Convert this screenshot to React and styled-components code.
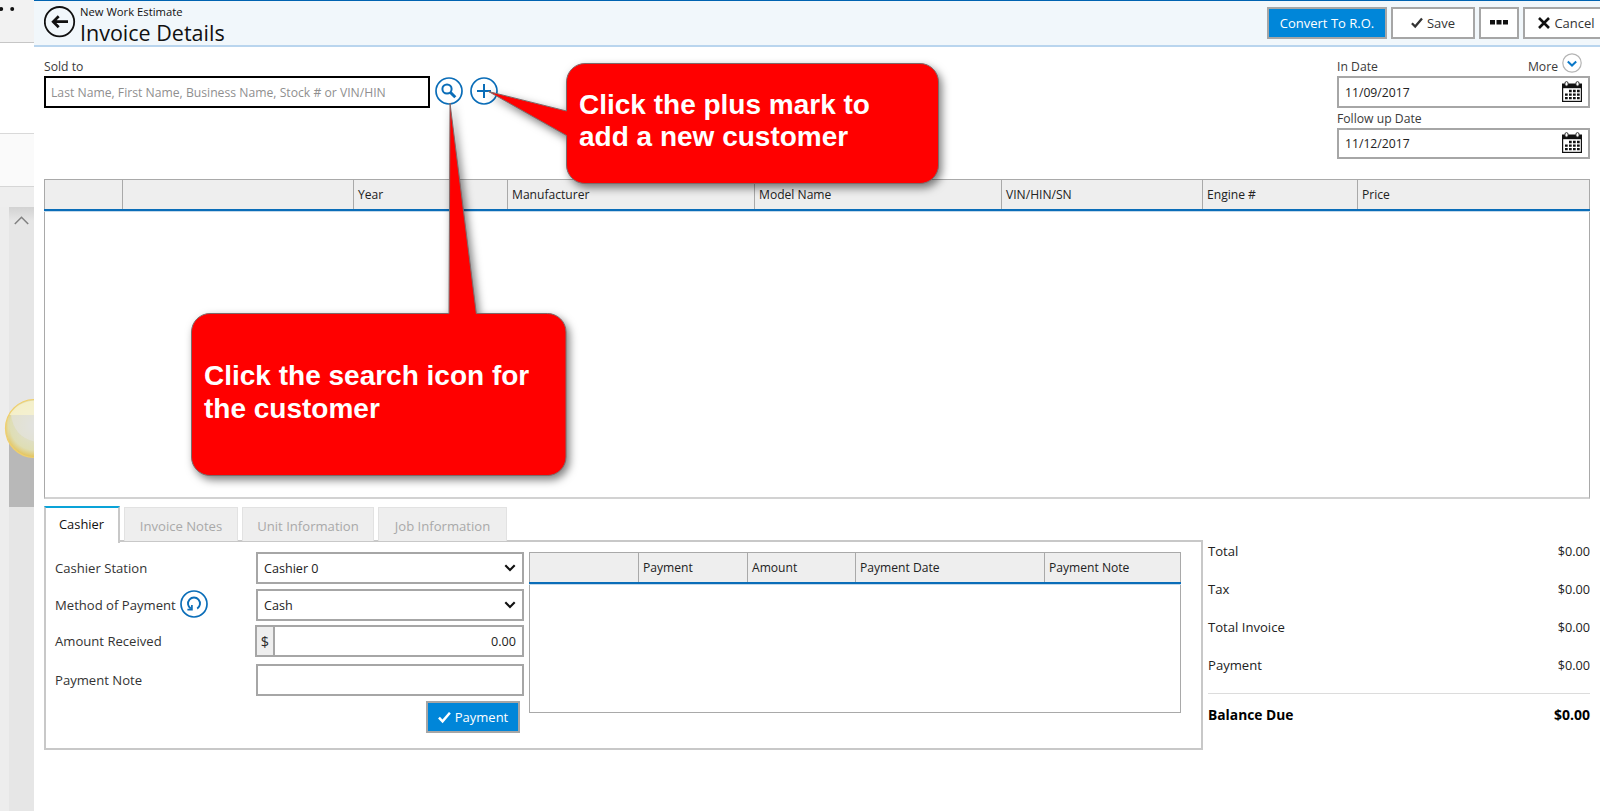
import React from 'react';
import styled, { createGlobalStyle, css } from 'styled-components';

const Global = createGlobalStyle`
  *, *::before, *::after { box-sizing: border-box; }
  body { margin: 0; background: #fff; overflow: hidden; }
  svg { display: block; flex: none; }
  button, input { font: inherit; }
`;

const Page = styled.div`
  position: relative;
  display: flex;
  width: 1600px;
  height: 811px;
  overflow: hidden;
  font-family: 'Open Sans', 'Noto Sans', sans-serif;
  font-size: 12.2px;
  color: #2b2b2b;
  white-space: nowrap;
`;

/* ---------- strip of the window behind ---------- */
const Backdrop = styled.aside`
  width: 34px;
  flex: none;
  display: flex;
  flex-direction: column;
  overflow: hidden;
  position: relative;
`;
const Band = styled.div`
  height: ${(p) => p.$h}px;
  background: ${(p) => p.$bg};
  border-bottom: ${(p) => (p.$line ? `1px solid ${p.$line}` : '0')};
  flex: none;
`;
const ScrollArea = styled.div`
  flex: 1;
  display: flex;
  background: #ededed;
  padding-left: 9px;
`;
const Track = styled.div`
  flex: 1;
  display: flex;
  flex-direction: column;
  align-items: center;
  background: linear-gradient(#d2d2d2, #e6e6e6 14px);
  padding-top: 9px;
`;
const ScrollArrow = styled.svg`
  margin-left: -1px;
`;
const Thumb = styled.div`
  width: 100%;
  height: 92px;
  margin-top: 190px;
  background: #b8b8b8;
`;
const Bubble = styled.svg`
  position: absolute;
  left: 4px;
  top: 398px;
`;
const Dots = styled.svg`
  position: absolute;
  left: 0;
  top: 5px;
`;

/* ---------- main window ---------- */
const Main = styled.main`
  flex: 1;
  display: flex;
  flex-direction: column;
  min-width: 0;
`;
const Header = styled.header`
  height: 47px;
  flex: none;
  display: flex;
  align-items: flex-start;
  padding-left: 10px;
  background: #f1f7fb;
  border-top: 1px solid #0063b1;
  border-bottom: 2px solid #b9d5ee;
  overflow: hidden;
`;
const BackIcon = styled.svg`
  margin-top: 5px;
`;
const Titles = styled.div`
  margin-left: 4px;
  flex: 1;
  color: #111;
`;
const Subtitle = styled.div`
  font-size: 11.25px;
  line-height: 14px;
  margin-top: 4px;
`;
const Title = styled.h1`
  margin: 0;
  font-weight: 400;
  font-size: 21.5px;
  line-height: 28px;
`;
const Actions = styled.div`
  display: flex;
  gap: 4px;
  margin: 6px -10px 0 0;
`;
const Button = styled.button`
  display: flex;
  align-items: center;
  justify-content: center;
  gap: 4px;
  height: ${(p) => p.$h || 32}px;
  width: ${(p) => p.$w}px;
  padding: 0;
  border: 2px solid #a6a6a6;
  background: ${(p) => (p.$primary ? '#0086d9' : '#fff')};
  color: ${(p) => (p.$primary ? '#fff' : '#333')};
  font-size: 13px;
  line-height: 18px;
`;

const Content = styled.div`
  flex: 1;
  display: flex;
  flex-direction: column;
  padding: 0 10px 0 10px;
`;
const TopForm = styled.section`
  height: 132px;
  display: flex;
  justify-content: space-between;
`;
const SoldTo = styled.div`
  display: flex;
  align-items: flex-start;
  padding-top: 10px;
`;
const Field = styled.div`
  display: flex;
  flex-direction: column;
  width: ${(p) => p.$w}px;
`;
const LabelRow = styled.div`
  height: ${(p) => p.$h}px;
  display: flex;
  justify-content: space-between;
  align-items: center;
  color: #3a3a3a;
`;
const Box = styled.div`
  height: ${(p) => p.$h || 32}px;
  display: flex;
  align-items: center;
  justify-content: ${(p) => (p.$end ? 'flex-end' : 'space-between')};
  border: 2px solid ${(p) => (p.$dark ? '#000' : '#a6a6a6')};
  background: #fff;
  padding: 0 6px 0 ${(p) => (p.$dark ? 5 : 6)}px;
  color: ${(p) => (p.$muted ? '#8f8f8f' : '#222')};
`;
const IconRow = styled.div`
  display: flex;
  gap: 7px;
  margin: 20px 0 0 5px;
`;
const Dates = styled.div`
  width: 253px;
  padding-top: 10px;
`;
const More = styled.span`
  display: flex;
  align-items: center;
  gap: 4px;
  padding-right: 8px;
`;
const MoreIcon = styled.svg`
  margin-top: -7px;
`;
const CalendarIcon = styled.svg`
  margin-bottom: 2px;
`;

/* ---------- tables ---------- */
const Grid = styled.section`
  width: ${(p) => p.$w};
  height: ${(p) => p.$h}px;
  border: 1px solid #a9a9a9;
  ${(p) => p.$soft && css`border-bottom: 2px solid #d2d2d2;`}
  flex: none;
`;
const HeadRow = styled.div`
  display: grid;
  grid-template-columns: ${(p) => p.$cols};
  height: 31px;
  background: #eee;
  border-bottom: 2px solid #0a6db8;
  box-shadow: 0 1px 0 #c4d9ea;
  margin: 0 -1px 0 -1px;
`;
const HeadCell = styled.div`
  display: flex;
  align-items: center;
  padding: 0 0 1px 4px;
  border-left: 1px solid #a9a9a9;
  color: #222;
  font-size: 12.1px;
  &:last-child { border-right: 1px solid #a9a9a9; }
`;

/* ---------- lower section ---------- */
const Lower = styled.section`
  display: flex;
  margin-top: 7px;
`;
const Cashier = styled.div`
  width: 1159px;
  flex: none;
`;
const Tabs = styled.nav`
  display: flex;
  align-items: flex-end;
  height: 36px;
  position: relative;
  z-index: 1;
  margin-bottom: -2px;
`;
const Tab = styled.div`
  width: ${(p) => p.$w}px;
  display: flex;
  align-items: center;
  justify-content: center;
  font-size: 13.1px;
  ${(p) =>
    p.$active
      ? css`
          height: 37px;
          margin: 0 4px -1px 0;
          padding: 0 1px 3px 0;
          background: #fff;
          color: #111;
          border: 2px solid #c8c8c8;
          border-top-color: #0aa3d8;
          border-bottom: 0;
          font-size: 12.9px;
        `
      : css`
          height: 34px;
          margin: 0 4px 1px 0;
          padding-top: 2px;
          background: #eee;
          color: #a9a9a9;
          border: 1px solid #e2e2e2;
          border-bottom: 0;
        `}
`;
const Panel = styled.div`
  height: 210px;
  display: flex;
  gap: 5px;
  border: 2px solid #c8c8c8;
  padding: 10px 10px 0 9px;
`;
const Form = styled.div`
  width: 469px;
  font-size: 13.1px;
`;
const FormRow = styled.div`
  display: flex;
  align-items: center;
  height: 32px;
  margin-bottom: ${(p) => p.$gap}px;
`;
const FormLabel = styled.div`
  display: flex;
  align-items: center;
  gap: 4px;
  width: ${(p) => p.$w || 201}px;
  height: 32px;
  color: #333;
`;
const ResetButton = styled.span`
  margin-bottom: 3px;
`;
const Control = styled.div`
  flex: 1;
  display: flex;
  font-size: 12.6px;
`;
const ControlBox = styled(Box)`
  flex: 1;
  height: 32px;
`;
const Prefix = styled.span`
  width: 18px;
  height: 32px;
  display: flex;
  align-items: center;
  justify-content: center;
  background: #eee;
  border: 2px solid #a6a6a6;
  border-right: 0;
  font-size: 14.5px;
`;
const ButtonRow = styled.div`
  display: flex;
  justify-content: flex-end;
  padding-right: 4px;
`;

const Totals = styled.dl`
  flex: 1;
  margin: 26px 0 0 5px;
`;
const TotalRow = styled.div`
  display: flex;
  justify-content: space-between;
  align-items: center;
  height: 38px;
  font-size: 13.1px;
  color: #222;
  dt, dd { margin: 0; }
  dd { font-size: 12.7px; }
  ${(p) =>
    p.$due &&
    css`
      height: 42px;
      border-top: 1px solid #dcdcdc;
      font-weight: 700;
      color: #000;
      margin-top: 9px;
      font-size: 13.8px;
      dd { font-size: 14px; }
    `}
`;

/* ---------- callouts ---------- */
const Callout = styled.div`
  position: absolute;
  left: ${(p) => p.$x}px;
  top: ${(p) => p.$y}px;
  width: 375px;
  height: ${(p) => p.$h}px;
  display: flex;
  align-items: center;
  padding: 0 0 ${(p) => p.$pb}px 13px;
  color: #fff;
  font: 700 28px/32.5px 'Liberation Sans', Arial, sans-serif;
`;
const CalloutShape = styled.svg`
  position: absolute;
  left: 0;
  top: 0;
  overflow: visible;
  filter: drop-shadow(3px 4px 4px rgba(0, 0, 0, 0.5));
`;
const CalloutText = styled.span`
  position: relative;
`;

const Check = ({ s = 12 }) => (
  <svg width={s} height={s} viewBox="0 0 12 12" fill="none" stroke="currentColor" strokeWidth="2.3">
    <path d="M.9 6.200l3.300 3.400L11 1.600" />
  </svg>
);
const Cross = () => (
  <svg width="12" height="12" viewBox="0 0 12 12" stroke="#111" strokeWidth="2.6">
    <path d="M1 1l10 10M11 1L1 11" />
  </svg>
);
const Ellipsis = () => (
  <svg width="18" height="9" viewBox="0 0 18 9" fill="#111">
    <path d="M0 1h5v4.500H0zM6.500 1h5v4.500h-5zM13 1h5v4.500h-5z" />
  </svg>
);
const Chevron = () => (
  <svg width="12" height="9" viewBox="0 0 12 9" fill="none" stroke="#111" strokeWidth="2.1">
    <path d="M1.300 1.300L6 6.100l4.700-4.800" />
  </svg>
);
const Calendar = () => (
  <CalendarIcon width="20" height="21" viewBox="0 0 20 21">
    <rect x=".6" y="4" width="18.800" height="16.400" fill="#fff" stroke="#111" strokeWidth="1.200" />
    <path d="M0 2.500h20v4.700H0z" fill="#111" />
    <g fill="#fff" stroke="#333" strokeWidth="1">
      <rect x="3" y=".6" width="3" height="4.400" rx="1.500" />
      <rect x="14" y=".6" width="3" height="4.400" rx="1.500" />
    </g>
    <path
      d="M7 8.800h2.700v2.500H7zM11 8.800h2.700v2.500H11zM15 8.800h2.700v2.500H15zM3 12.500h2.700v2.300H3zM7 12.500h2.700v2.300H7zM11 12.500h2.700v2.300H11zM15 12.500h2.700v2.300H15zM3 16h2.700v2.300H3zM7 16h2.700v2.300H7zM11 16h2.700v2.300H11zM15 16h2.700v2.300H15z"
      fill="#111"
    />
  </CalendarIcon>
);
const Ring = ({ children }) => (
  <svg width="28" height="28" viewBox="0 0 28 28" fill="none" stroke="#0a6db8" strokeWidth="1.7">
    <circle cx="14" cy="14" r="13" />
    {children}
  </svg>
);

const UNIT_COLS = ['', '', 'Year', 'Manufacturer', 'Model Name', 'VIN/HIN/SN', 'Engine #', 'Price'];
const PAYMENT_COLS = ['', 'Payment', 'Amount', 'Payment Date', 'Payment Note'];
const TOTALS = ['Total', 'Tax', 'Total Invoice', 'Payment'];

export default function App() {
  return (
    <Page>
      <Global />
      <Backdrop>
        <Band $h={43} $bg="#f2f2f2" $line="#c6c6c6" />
        <Band $h={91} $bg="#fff" $line="#d9d9d9" />
        <Band $h={53} $bg="#fafafa" $line="#d6d6d6" />
        <Band $h={20} $bg="#eee" />
        <ScrollArea>
          <Track>
            <ScrollArrow width="15" height="9" viewBox="0 0 15 9" fill="none" stroke="#808080" strokeWidth="1.500">
              <path d="M.8 8l6.700-6.800L14.200 8" />
            </ScrollArrow>
            <Thumb />
          </Track>
        </ScrollArea>
        <Dots width="18" height="8" viewBox="0 0 18 8" fill="#111">
          <circle cx="1.200" cy="4" r="2" />
          <circle cx="12.200" cy="4" r="2" />
        </Dots>
        <Bubble width="62" height="62" viewBox="0 0 62 62">
          <defs>
            <radialGradient id="glow" cx=".5" cy=".45" r=".56">
              <stop offset="0" stopColor="#e4e4e0" stopOpacity=".9" />
              <stop offset=".75" stopColor="#e3e2b4" stopOpacity=".9" />
              <stop offset="1" stopColor="#e5c04e" />
            </radialGradient>
          </defs>
          <circle cx="30.500" cy="30.500" r="29" fill="url(#glow)" stroke="#f0cf6c" strokeWidth="1.200" />
          <path d="M5.500 17A29 29 0 0 1 55.500 17z" fill="#fbf5d2" opacity=".7" />
          <path d="M7 17h26v27C18 42 9 32 7 17z" fill="#e3e3e3" opacity=".55" />
        </Bubble>
      </Backdrop>

      <Main>
        <Header>
          <BackIcon width="32" height="32" viewBox="0 0 32 32" fill="none" stroke="#111">
            <circle cx="15.500" cy="15.700" r="14.700" strokeWidth="1.800" />
            <path d="M24 15.700H9.500M14.700 10.200L9.200 15.700l5.500 5.500" strokeWidth="2.700" />
          </BackIcon>
          <Titles>
            <Subtitle>New Work Estimate</Subtitle>
            <Title>Invoice Details</Title>
          </Titles>
          <Actions>
            <Button $primary $w={120}>Convert To R.O.</Button>
            <Button $w={84}><Check />Save</Button>
            <Button $w={40}><Ellipsis /></Button>
            <Button $w={87}><Cross />Cancel</Button>
          </Actions>
        </Header>

        <Content>
          <TopForm>
            <SoldTo>
              <Field $w={386}>
                <LabelRow $h={19}>Sold to</LabelRow>
                <Box $dark $muted>Last Name, First Name, Business Name, Stock # or VIN/HIN</Box>
              </Field>
              <IconRow>
                <Ring>
                  <circle cx="12" cy="12" r="4.600" strokeWidth="2" />
                  <path d="M15.500 15.500l4.800 4.800" strokeWidth="3" />
                </Ring>
                <Ring><path d="M14 7v14M7 14h14" strokeWidth="2" /></Ring>
              </IconRow>
            </SoldTo>
            <Dates>
              <LabelRow $h={19}>
                In Date
                <More>
                  More
                  <MoreIcon width="20" height="20" viewBox="0 0 20 20" fill="none">
                    <circle cx="10" cy="10" r="9.200" stroke="#b4b4b4" strokeWidth="1.200" />
                    <path d="M5.800 8.500l4.200 4 4.200-4" stroke="#0a78c8" strokeWidth="2" />
                  </MoreIcon>
                </More>
              </LabelRow>
              <Box>11/09/2017<Calendar /></Box>
              <LabelRow $h={20}>Follow up Date</LabelRow>
              <Box $h={31}>11/12/2017<Calendar /></Box>
            </Dates>
          </TopForm>

          <Grid $w="100%" $h={320} $soft>
            <HeadRow $cols="78px 231px 154px 247px 247px 201px 155px 1fr">
              {UNIT_COLS.map((name, i) => (
                <HeadCell key={i}>{name}</HeadCell>
              ))}
            </HeadRow>
          </Grid>

          <Lower>
            <Cashier>
              <Tabs>
                <Tab $active $w={76}>Cashier</Tab>
                <Tab $w={114}>Invoice Notes</Tab>
                <Tab $w={132}>Unit Information</Tab>
                <Tab $w={129}>Job Information</Tab>
              </Tabs>
              <Panel>
                <Form>
                  <FormRow $gap={5}>
                    <FormLabel>Cashier Station</FormLabel>
                    <Control><ControlBox>Cashier 0<Chevron /></ControlBox></Control>
                  </FormRow>
                  <FormRow $gap={4}>
                    <FormLabel>
                      Method of Payment
                      <ResetButton>
                        <Ring>
                          <path d="M10.800 18.600A6 6 0 1 1 17.200 18.600" strokeWidth="1.900" />
                          <path d="M11.900 15v4.600H7.400" strokeWidth="1.700" />
                        </Ring>
                      </ResetButton>
                    </FormLabel>
                    <Control><ControlBox>Cash<Chevron /></ControlBox></Control>
                  </FormRow>
                  <FormRow $gap={7}>
                    <FormLabel $w={200}>Amount Received</FormLabel>
                    <Control><Prefix>$</Prefix><ControlBox $end>0.00</ControlBox></Control>
                  </FormRow>
                  <FormRow $gap={5}>
                    <FormLabel>Payment Note</FormLabel>
                    <Control><ControlBox /></Control>
                  </FormRow>
                  <ButtonRow>
                    <Button $primary $w={94}><Check s={13} />Payment</Button>
                  </ButtonRow>
                </Form>
                <Grid $w="652px" $h={161}>
                  <HeadRow $cols="109px 109px 108px 189px 1fr">
                    {PAYMENT_COLS.map((name, i) => (
                      <HeadCell key={i}>{name}</HeadCell>
                    ))}
                  </HeadRow>
                </Grid>
              </Panel>
            </Cashier>
            <Totals>
              {TOTALS.map((name) => (
                <TotalRow key={name}><dt>{name}</dt><dd>$0.00</dd></TotalRow>
              ))}
              <TotalRow $due><dt>Balance Due</dt><dd>$0.00</dd></TotalRow>
            </Totals>
          </Lower>
        </Content>
      </Main>

      <Callout $x={191} $y={313} $h={163} $pb={4}>
        <CalloutShape width="375" height="163" viewBox="0 0 375 163">
          <path
            d="M19 .5H258L259-210L285.300.5H356.500a18.500 18.500 0 0 1 18.500 18.500V144a18.500 18.500 0 0 1-18.500 18.500H19A18.500 18.500 0 0 1 .5 144V19A18.500 18.500 0 0 1 19 .5z"
            fill="#f00" stroke="#7d6a6a" strokeWidth="1"
          />
        </CalloutShape>
        <CalloutText>Click the search icon for<br />the customer</CalloutText>
      </Callout>
      <Callout $x={566} $y={62.5} $h={121} $pb={4}>
        <CalloutShape width="375" height="121" viewBox="0 0 375 121">
          <path
            d="M19 .5H354a18.500 18.500 0 0 1 18.500 18.500V102a18.500 18.500 0 0 1-18.500 18.500H19A18.500 18.500 0 0 1 .5 102V72.500L-77.500 28.500L.5 48V19A18.500 18.500 0 0 1 19 .5z"
            fill="#f00" stroke="#7d6a6a" strokeWidth="1"
          />
        </CalloutShape>
        <CalloutText>Click the plus mark to<br />add a new customer</CalloutText>
      </Callout>
    </Page>
  );
}
